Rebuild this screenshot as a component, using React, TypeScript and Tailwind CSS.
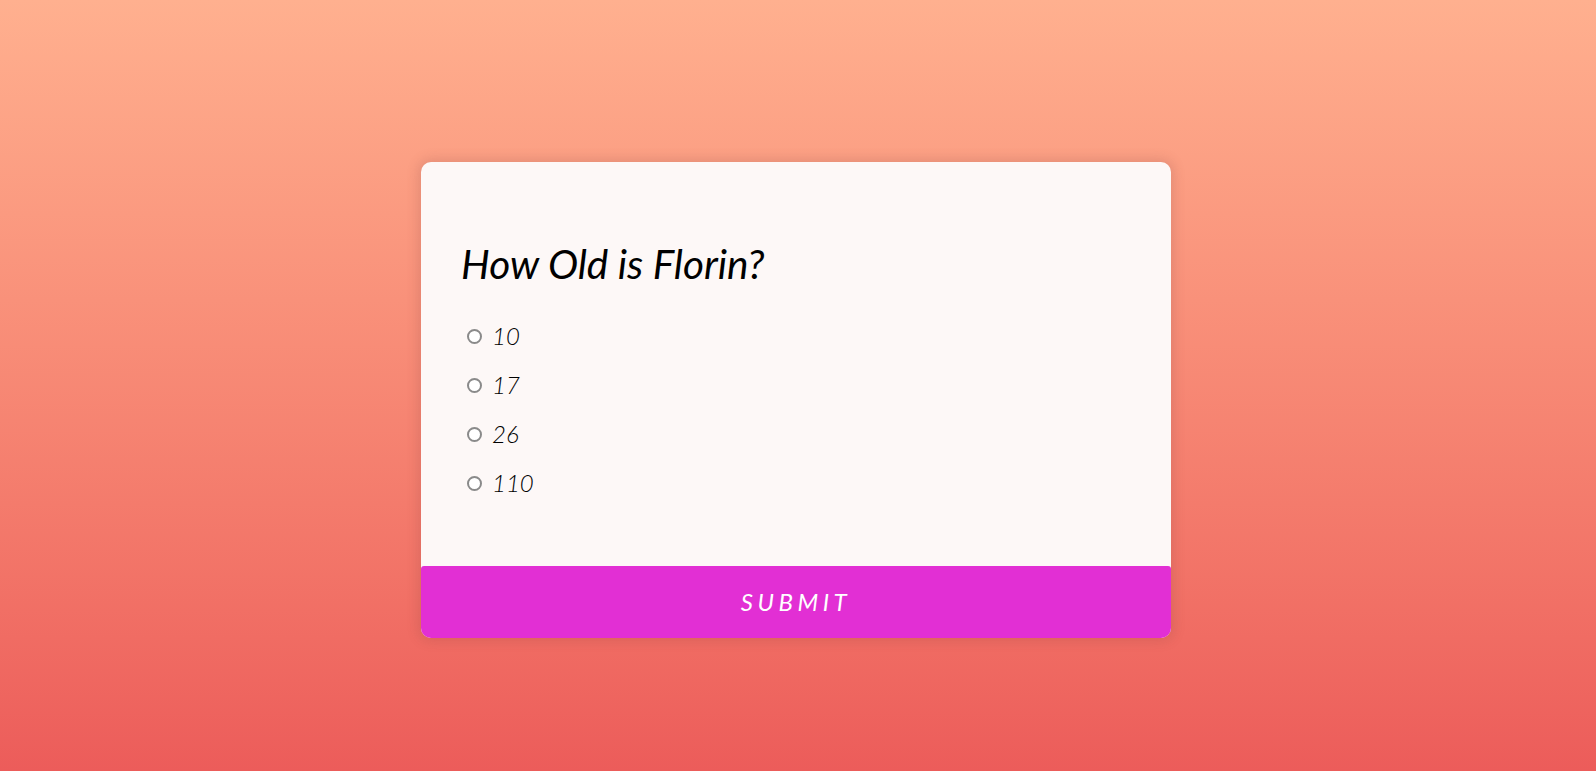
const options = ["10", "17", "26", "110"];

export default function App() {
  return (
    <div
      className="min-h-screen w-full flex items-start justify-center bg-gradient-to-b from-[#ffb08f] to-[#ec5c5a] pt-[162px] pr-[4px]"
      style={{ fontFamily: "Lato, 'Open Sans', sans-serif" }}
    >
      <div className="w-[750px] bg-[#fdf8f7] rounded-[10px] shadow-[0_0_12px_3px_rgba(120,60,60,0.18)] overflow-hidden">
        <div className="pt-[78px] pb-[68px] px-[40px]">
          <h2 className="text-[40.5px] italic font-normal text-black leading-[1.2]">How Old is Florin?</h2>
          <ul className="mt-[33px] flex flex-col gap-[20px]">
            {options.map((o, i) => (
              <li key={o} className="flex items-center h-[29px]">
                {/* native-looking radio, darker ring */}
                <input
                  type="radio"
                  name="answer"
                  id={"a" + i}
                  className="appearance-none shrink-0 ml-[6px] w-[15px] h-[15px] m-0 rounded-full border-2 border-[#8a8a8a] bg-white"
                />
                <label htmlFor={"a" + i} className="ml-[10px] text-[24px] italic font-light text-black leading-[1.2]">
                  {o}
                </label>
              </li>
            ))}
          </ul>
        </div>
        <button className="w-full h-[72px] bg-[#e22fd4] rounded-t-[3px] text-white text-[24px] italic font-normal tracking-[4.5px] uppercase">
          Submit
        </button>
      </div>
    </div>
  );
}
